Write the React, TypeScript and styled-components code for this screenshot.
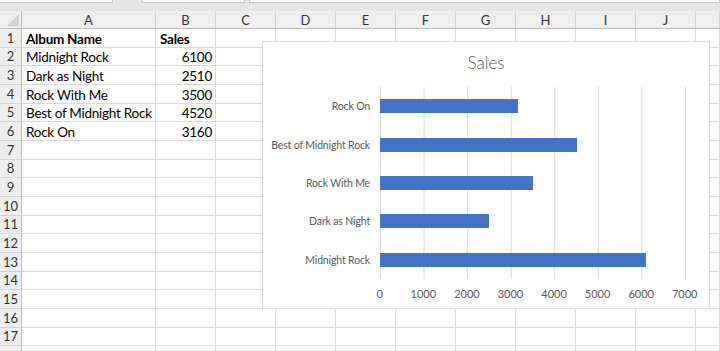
import React from 'react'
import styled, { createGlobalStyle } from 'styled-components'

const GlobalStyle = createGlobalStyle`
  html, body {
    margin: 0;
    padding: 0;
    background: #ffffff;
  }
  body {
    font-family: Lato, "Liberation Sans", sans-serif;
  }
`;

type Album = { name: string; sales: number }

const albums: Album[] = [
  { name: 'Midnight Rock', sales: 6100 },
  { name: 'Dark as Night', sales: 2510 },
  { name: 'Rock With Me', sales: 3500 },
  { name: 'Best of Midnight Rock', sales: 4520 },
  { name: 'Rock On', sales: 3160 },
]

const columns = ['A', 'B', 'C', 'D', 'E', 'F', 'G', 'H', 'I', 'J', '']
const ROW_COUNT = 18
const LABELLED_ROWS = 17
const AXIS_MAX = 7000
const PLOT_WIDTH = 305
const ticks = [0, 1000, 2000, 3000, 4000, 5000, 6000, 7000]

const App = () => {
  const rows: { a: string; b: string; bold?: boolean }[] = [
    { a: 'Album Name', b: 'Sales', bold: true },
    ...albums.map(al => ({ a: al.name, b: String(al.sales) })),
  ]

  return (
    <Page>
      <GlobalStyle />
      <FormulaStrip>
        <NameBox />
        <Spacer />
        <FxBox />
        <InputBox />
      </FormulaStrip>
      <Sheet>
        <Corner>
          <CornerMark />
        </Corner>
        {columns.map((c, i) => (
          <ColHeader key={i}>{c}</ColHeader>
        ))}
        {Array.from({ length: ROW_COUNT }).map((_, r) => {
          const data = rows[r]
          return (
            <React.Fragment key={r}>
              <RowHeader>{r < LABELLED_ROWS ? r + 1 : ''}</RowHeader>
              {columns.map((_, c) => {
                if (c === 0) return <Cell key={c} bold={data?.bold}>{data?.a}</Cell>
                if (c === 1) return <Cell key={c} bold={data?.bold} numeric={!data?.bold}>{data?.b}</Cell>
                return <Cell key={c} />
              })}
            </React.Fragment>
          )
        })}
      </Sheet>

      <Chart>
        <ChartTitle>Sales</ChartTitle>
        <PlotRow>
          <CategoryLabels>
            {[...albums].reverse().map(al => (
              <CategoryLabel key={al.name}>{al.name}</CategoryLabel>
            ))}
          </CategoryLabels>
          <PlotArea>
            {[...albums].reverse().map(al => (
              <BarBand key={al.name}>
                <Bar style={{ width: `${(al.sales / AXIS_MAX) * PLOT_WIDTH}px` }} />
              </BarBand>
            ))}
          </PlotArea>
        </PlotRow>
        <AxisRow>
          {ticks.map(t => (
            <AxisLabel key={t}>{t}</AxisLabel>
          ))}
        </AxisRow>
      </Chart>
    </Page>
  )
}

const Page = styled.div`
  position: relative;
  width: 720px;
  height: 351px;
  overflow: hidden;
  background: #ffffff;
`;

const FormulaStrip = styled.div`
  height: 11px;
  background: #e6e6e6;
  display: flex;
  align-items: flex-start;
`;

const NameBox = styled.div`
  width: 112px;
  height: 2px;
  background: #ffffff;
  border-bottom: 1px solid #c6c6c6;
  border-right: 1px solid #c6c6c6;
`;

const Spacer = styled.div`
  width: 28px;
`;

const FxBox = styled.div`
  width: 102px;
  height: 2px;
  background: #ffffff;
  border: 1px solid #c6c6c6;
  border-top: none;
`;

const InputBox = styled.div`
  flex: 1;
  margin-left: 4px;
  height: 2px;
  background: #ffffff;
  border: 1px solid #c6c6c6;
  border-top: none;
`;

const Sheet = styled.div`
  display: grid;
  grid-template-columns: 22px 134px repeat(9, 60px) 1fr;
  grid-template-rows: 18px;
  grid-auto-rows: 18.67px;
  font-size: 13.5px;
  letter-spacing: -0.25px;
  color: #000000;
`;

const Corner = styled.div`
  position: relative;
  background: #efefef;
  border-right: 1px solid #bdbdbd;
  border-bottom: 1px solid #bdbdbd;
  box-sizing: border-box;
`;

const CornerMark = styled.div`
  position: absolute;
  right: 2px;
  bottom: 2px;
  width: 0;
  height: 0;
  border-left: 12px solid transparent;
  border-bottom: 12px solid #d2d2d2;
`;

const ColHeader = styled.div`
  background: #efefef;
  border-right: 1px solid #d4d4d4;
  border-bottom: 1px solid #bdbdbd;
  box-sizing: border-box;
  display: flex;
  align-items: center;
  justify-content: center;
  font-size: 13px;
  letter-spacing: 0;
  color: #333333;
`;

const RowHeader = styled.div`
  background: #efefef;
  border-right: 1px solid #bdbdbd;
  border-bottom: 1px solid #d4d4d4;
  box-sizing: border-box;
  display: flex;
  align-items: center;
  justify-content: center;
  font-size: 13px;
  letter-spacing: 0;
  color: #333333;
`;

const Cell = styled.div<{ bold?: boolean; numeric?: boolean }>`
  border-right: 1px solid #dadada;
  border-bottom: 1px solid #dadada;
  box-sizing: border-box;
  display: flex;
  align-items: flex-end;
  justify-content: ${p => (p.numeric ? 'flex-end' : 'flex-start')};
  padding: 0 3px 0 4px;
  font-weight: ${p => (p.bold ? 700 : 400)};
  white-space: nowrap;
  overflow: hidden;
  line-height: 15px;
`;

const Chart = styled.div`
  position: absolute;
  left: 262px;
  top: 41px;
  width: 448px;
  height: 268px;
  box-sizing: border-box;
  background: #ffffff;
  border: 1px solid #d9d9d9;
  display: flex;
  flex-direction: column;
  color: #595959;
`;

const ChartTitle = styled.div`
  margin-top: 10px;
  height: 22px;
  line-height: 22px;
  text-align: center;
  font-size: 17px;
  font-weight: 300;
  color: #595959;
`;

const PlotRow = styled.div`
  margin-top: 13px;
  display: grid;
  grid-template-columns: 117px 306px;
  height: 192px;
`;

const CategoryLabels = styled.div`
  display: grid;
  grid-template-rows: repeat(5, 1fr);
`;

const CategoryLabel = styled.div`
  display: flex;
  align-items: center;
  justify-content: flex-end;
  padding-right: 10px;
  font-size: 10.5px;
  letter-spacing: -0.15px;
  white-space: nowrap;
`;

const PlotArea = styled.div`
  display: grid;
  grid-template-rows: repeat(5, 1fr);
  background-image: linear-gradient(to right, #d9d9d9 1px, transparent 1px);
  background-size: 43.57px 100%;
  background-repeat: repeat-x;
`;

const BarBand = styled.div`
  display: flex;
  align-items: center;
`;

const Bar = styled.div`
  height: 14px;
  background: #4472c4;
`;

const AxisRow = styled.div`
  margin-top: 8px;
  padding-left: 95px;
  display: grid;
  grid-template-columns: repeat(8, 43.57px);
`;

const AxisLabel = styled.div`
  text-align: center;
  font-size: 11px;
  line-height: 13px;
`;

export default App;
